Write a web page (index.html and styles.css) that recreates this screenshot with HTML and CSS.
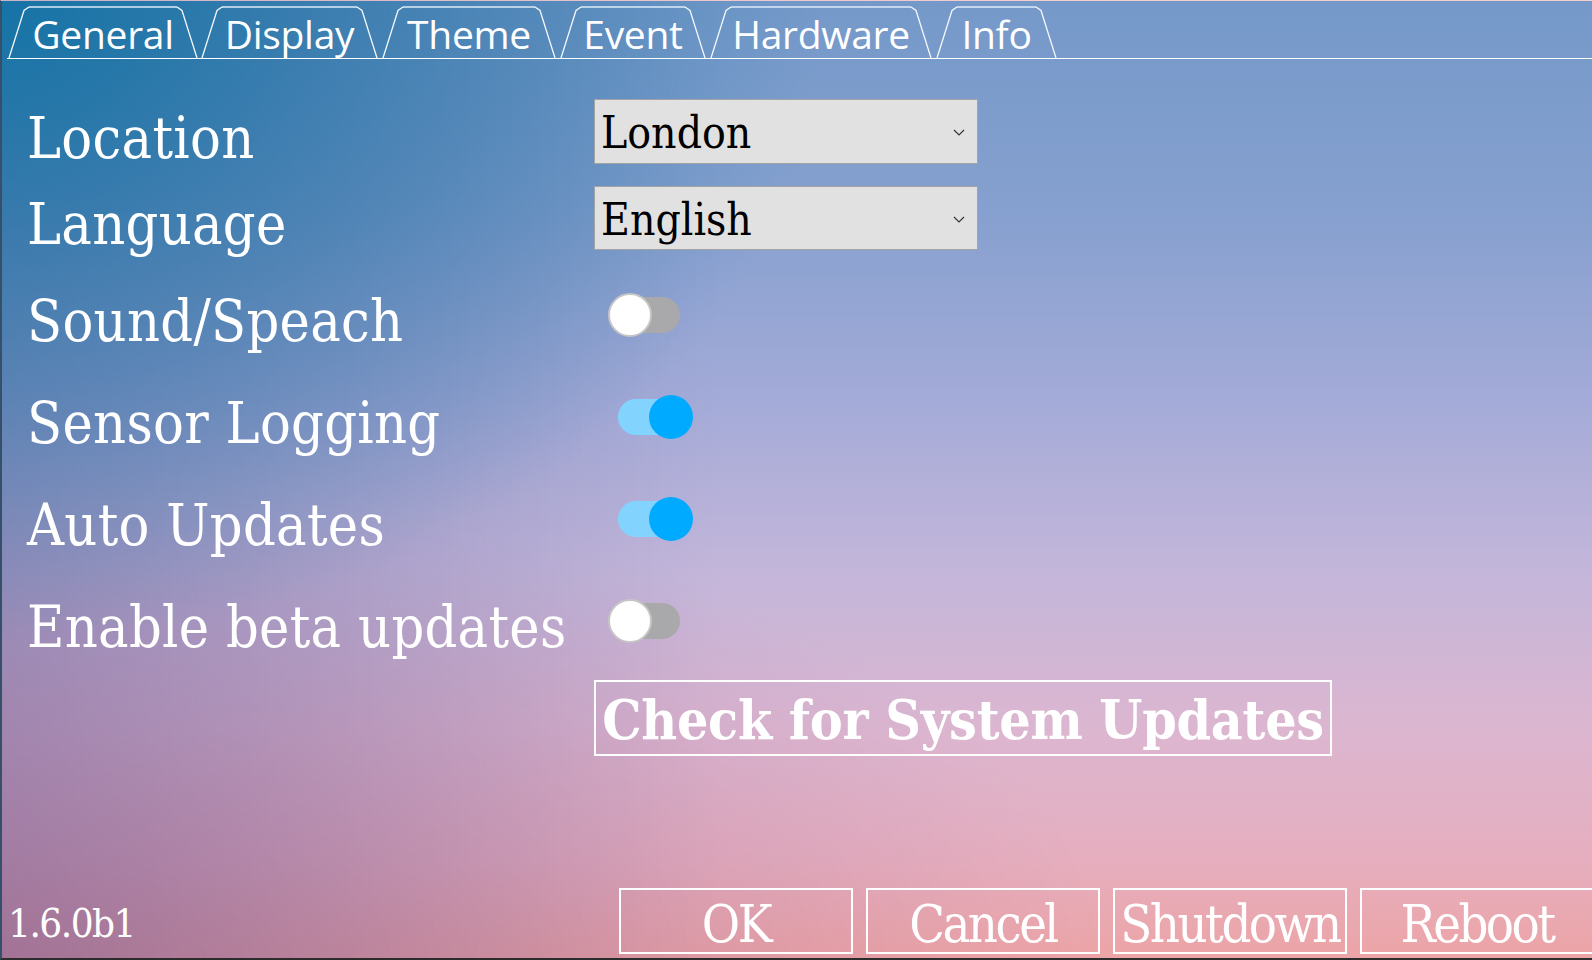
FILE: index.html
```html
<!DOCTYPE html>
<html lang="en">
<head>
<meta charset="utf-8">
<title>Settings</title>
<link rel="stylesheet" href="styles.css">
</head>
<body>
<div class="screen">
  <nav class="tabs">
    <div class="tab">
      <svg class="tab-shape" width="190" height="52" viewBox="0 0 190 52"><path class="tab-side" d="M1 52 L16 4.5 L21 1 M169 1 L174 4.5 L189 52"/><path class="tab-top" d="M21 1 H169"/></svg>
      <span class="tab-label">General</span>
    </div>
    <div class="tab">
      <svg class="tab-shape" width="177" height="52" viewBox="0 0 177 52"><path class="tab-side" d="M1 52 L16 4.5 L21 1 M156 1 L161 4.5 L176 52"/><path class="tab-top" d="M21 1 H156"/></svg>
      <span class="tab-label">Display</span>
    </div>
    <div class="tab">
      <svg class="tab-shape" width="174" height="52" viewBox="0 0 174 52"><path class="tab-side" d="M1 52 L16 4.5 L21 1 M153 1 L158 4.5 L173 52"/><path class="tab-top" d="M21 1 H153"/></svg>
      <span class="tab-label">Theme</span>
    </div>
    <div class="tab">
      <svg class="tab-shape" width="146" height="52" viewBox="0 0 146 52"><path class="tab-side" d="M1 52 L16 4.5 L21 1 M125 1 L130 4.5 L145 52"/><path class="tab-top" d="M21 1 H125"/></svg>
      <span class="tab-label">Event</span>
    </div>
    <div class="tab">
      <svg class="tab-shape" width="222" height="52" viewBox="0 0 222 52"><path class="tab-side" d="M1 52 L16 4.5 L21 1 M201 1 L206 4.5 L221 52"/><path class="tab-top" d="M21 1 H201"/></svg>
      <span class="tab-label">Hardware</span>
    </div>
    <div class="tab">
      <svg class="tab-shape" width="121" height="52" viewBox="0 0 121 52"><path class="tab-side" d="M1 52 L16 4.5 L21 1 M100 1 L105 4.5 L120 52"/><path class="tab-top" d="M21 1 H100"/></svg>
      <span class="tab-label">Info</span>
    </div>
  </nav>

  <main class="form">
    <div class="row row-select row-first">
      <span class="label">Location</span>
      <div class="select"><span class="select-value">London</span><svg class="chevron" width="12" height="7" viewBox="0 0 12 7"><path d="M1 1 L6 6 L11 1"/></svg></div>
    </div>
    <div class="row row-select">
      <span class="label">Language</span>
      <div class="select"><span class="select-value">English</span><svg class="chevron" width="12" height="7" viewBox="0 0 12 7"><path d="M1 1 L6 6 L11 1"/></svg></div>
    </div>
    <div class="row row-toggle row-after-select">
      <span class="label">Sound/Speach</span>
      <span class="toggle"><span class="knob"></span></span>
    </div>
    <div class="row row-toggle">
      <span class="label">Sensor Logging</span>
      <span class="toggle is-on"><span class="knob"></span></span>
    </div>
    <div class="row row-toggle">
      <span class="label">Auto Updates</span>
      <span class="toggle is-on"><span class="knob"></span></span>
    </div>
    <div class="row row-toggle">
      <span class="label">Enable beta updates</span>
      <span class="toggle"><span class="knob"></span></span>
    </div>
    <div class="row row-action">
      <button class="check-btn">Check for System Updates</button>
    </div>
  </main>

  <footer class="footer">
    <span class="version">1.6.0b1</span>
    <div class="buttons">
      <button class="btn">OK</button>
      <button class="btn">Cancel</button>
      <button class="btn">Shutdown</button>
      <button class="btn">Reboot</button>
    </div>
  </footer>
</div>
</body>
</html>
```

FILE: styles.css
```css
* { box-sizing: border-box; }

html, body {
  margin: 0;
  padding: 0;
  width: 1592px;
  height: 960px;
  overflow: hidden;
}

.screen {
  width: 1592px;
  height: 960px;
  display: flex;
  flex-direction: column;
  overflow: hidden;
  border-left: 2px solid #36506a;
  border-bottom: 2px solid #2c2c2c;
  border-top: 1px solid rgba(255, 255, 255, 0.45);
  color: #fff;
  background:
    radial-gradient(ellipse 820px 640px at 0 0, rgba(22, 116, 166, 1) 0%, rgba(22, 116, 166, 0.55) 40%, rgba(22, 116, 166, 0) 100%),
    radial-gradient(ellipse 1100px 480px at 0 100%, rgba(130, 80, 140, 0.35) 0%, rgba(130, 80, 140, 0) 100%),
    linear-gradient(to right, rgba(60, 70, 130, 0.32) 0%, rgba(60, 70, 130, 0) 45%),
    linear-gradient(to bottom, #7499c9 0%, #86a0cf 22%, #a4abd8 42%, #c4b6da 60%, #dcb6d0 76%, #e6aebe 90%, #eca4a6 100%);
}

/* ---------- tabs ---------- */
.tabs {
  display: flex;
  gap: 4px;
  margin: 5px 0 0 5px;
  padding-left: 1px;
  border-bottom: 1.5px solid #fff;
}

.tab {
  display: grid;
  height: 52px;
}

.tab-shape,
.tab-label {
  grid-area: 1 / 1;
}

.tab-shape {
  display: block;
  fill: none;
}

.tab-side {
  stroke: #f4f8fb;
  stroke-width: 1.3;
}

.tab-top {
  stroke: rgba(220, 235, 248, 0.75);
  stroke-width: 2;
}

.tab-label {
  justify-self: center;
  align-self: end;
  font-family: "Open Sans", "Noto Sans", sans-serif;
  font-size: 39px;
  line-height: 52px;
  padding-top: 2px;
  margin-bottom: -2px;
  letter-spacing: -0.3px;
  color: #fff;
}

.tab:first-child { margin-right: -1px; }

/* ---------- form ---------- */
.form {
  display: flex;
  flex-direction: column;
  padding: 40px 0 0 25px;
}

.row {
  display: flex;
  align-items: center;
}

.row-select { height: 65px; }
.row-select + .row-select { margin-top: 22px; height: 64px; }
.row-after-select { margin-top: 14px; }
.row-toggle { height: 102px; }

.label {
  width: 567px;
  flex: none;
  font-family: "DejaVu Serif Condensed", "DejaVu Serif", serif;
  font-stretch: condensed;
  font-size: 57px;
  line-height: 1;
  padding-top: 13px;
  letter-spacing: 0.3px;
  white-space: nowrap;
}

.select {
  width: 384px;
  height: 100%;
  display: flex;
  align-items: center;
  justify-content: space-between;
  background: #e1e1e1;
  border: 1px solid #a3a3a3;
  padding: 0 12px 0 6px;
  color: #000;
}

.select-value {
  font-family: "DejaVu Serif Condensed", "DejaVu Serif", serif;
  font-stretch: condensed;
  font-size: 44px;
  line-height: 1;
  padding-top: 3px;
}

.chevron {
  fill: none;
  stroke: #333;
  stroke-width: 1.2;
  margin-top: 2px;
}

.toggle {
  position: relative;
  width: 62px;
  height: 36px;
  margin-left: 24px;
  border-radius: 18px;
  background: #a9a9ab;
}

.knob {
  position: absolute;
  top: -4px;
  left: -10px;
  width: 44px;
  height: 44px;
  border-radius: 50%;
  background: #fff;
  border: 2px solid #c6c6c6;
}

.toggle.is-on { background: #82d4ff; }

.toggle.is-on .knob {
  left: 31px;
  background: #00aaff;
  border: none;
}

.row-action {
  margin-top: 8px;
  padding-left: 567px;
}

.check-btn {
  width: 738px;
  height: 76px;
  padding: 2px 4px 0;
  background: transparent;
  border: 2px solid #fff;
  color: #fff;
  font-family: "DejaVu Serif Condensed", "DejaVu Serif", serif;
  font-stretch: condensed;
  font-weight: bold;
  font-size: 55px;
  letter-spacing: -0.3px;
  line-height: 1;
  white-space: nowrap;
  text-align: center;
}

/* ---------- footer ---------- */
.footer {
  margin-top: auto;
  display: flex;
  align-items: flex-end;
  padding: 0 0 4px 6px;
}

.version {
  flex: 1;
  font-family: "DejaVu Serif Condensed", "DejaVu Serif", serif;
  font-stretch: condensed;
  font-size: 40px;
  letter-spacing: -1.5px;
  line-height: 1;
  padding-bottom: 11px;
}

.buttons {
  display: flex;
  gap: 13px;
  flex: none;
  width: 973px;
}

.btn {
  flex: none;
  width: 234px;
  height: 66px;
  padding: 6px 0 0;
  background: transparent;
  border: 2px solid #fff;
  color: #fff;
  font-family: "DejaVu Serif Condensed", "DejaVu Serif", serif;
  font-stretch: condensed;
  font-size: 52px;
  letter-spacing: -2.5px;
  line-height: 1;
  white-space: nowrap;
  overflow: hidden;
}
```
